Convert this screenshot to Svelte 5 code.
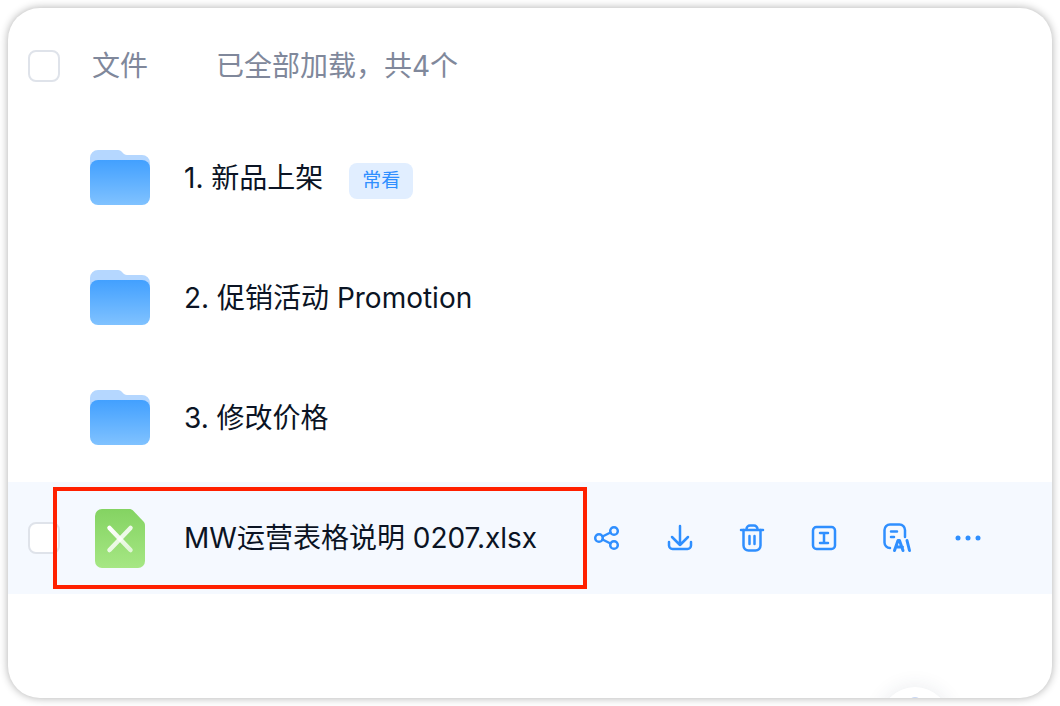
<script>
	const folders = [
		{ name: "1. 新品上架", tag: "常看" },
		{ name: "2. 促销活动 Promotion" },
		{ name: "3. 修改价格" },
	];
</script>

{#snippet checkbox()}
	<span class="checkbox"></span>
{/snippet}

<div class="card">
	<header class="head">
		{@render checkbox()}
		<span class="head-title">文件</span>
		<span class="head-count">已全部加载，共4个</span>
	</header>

	{#each folders as folder}
		<div class="row">
			<svg class="folder" width="60" height="56" viewBox="0 0 60 56">
				<path d="M0 8a8 8 0 0 1 8-8h20c4 0 5 5 9 5h15a8 8 0 0 1 8 8v20H0z" fill="#b5d7ff" />
				<rect y="10" width="60" height="45" rx="8" fill="url(#folderFill)" />
			</svg>
			<span class="name">{folder.name}</span>
			{#if folder.tag}
				<span class="tag">{folder.tag}</span>
			{/if}
		</div>
	{/each}

	<div class="row active">
		{@render checkbox()}
		<svg class="sheet" width="50" height="59" viewBox="0 0 50 59">
			<path d="M7 0h27c2 0 3 .6 4.500 2l9.500 10c1.400 1.500 2 2.600 2 4.500V52a7 7 0 0 1-7 7H7a7 7 0 0 1-7-7V7a7 7 0 0 1 7-7z" fill="url(#sheetFill)" />
			<path d="M35.500 19l-21 22" stroke="url(#crossFill)" stroke-width="4.500" stroke-linecap="round" />
			<path d="M14.500 19l21 22" stroke="url(#crossFillBack)" stroke-width="4.500" stroke-linecap="round" />
		</svg>
		<span class="name">MW运营表格说明 0207.xlsx</span>

		<div class="actions">
			<svg viewBox="0 0 32 32">
				<circle cx="7" cy="16" r="3.800" />
				<circle cx="22" cy="9" r="3.800" />
				<circle cx="22" cy="23" r="3.800" />
				<path d="M10.500 14.500l8-4M10.500 17.500l8 4" />
			</svg>
			<svg viewBox="0 0 32 32">
				<path d="M16 4v19M8 15l8 8 8-8" />
				<path d="M5 20v3.500a3.500 3.500 0 0 0 3.500 3.500h15a3.500 3.500 0 0 0 3.500-3.500V20" />
			</svg>
			<svg viewBox="0 0 32 32">
				<path d="M5 8h22M10.500 8V7a3.500 3.500 0 0 1 3.500-3.500h4A3.500 3.500 0 0 1 21.500 7v1" />
				<path d="M7.500 8v15.500a5 5 0 0 0 5 5h7a5 5 0 0 0 5-5V8" />
				<path d="M13.500 14v8M18.500 14v8" />
			</svg>
			<svg viewBox="0 0 32 32">
				<rect x="5" y="5" width="22" height="22" rx="3.500" />
				<path d="M12 11h8M12 21h8M16 11v10" />
			</svg>
			<svg viewBox="0 0 32 32">
				<path d="M10 26a5.500 5.500 0 0 1-5.500-5.500V8A5.500 5.500 0 0 1 10 2.500h9.500A5.500 5.500 0 0 1 25 8v7" />
				<path d="M11 9.500h6M11 15h3" />
				<path class="bold" d="M14.500 28.500l3.500-10h1.500l3.500 10M16 25h6.500M27 18.500l2.500 10" />
			</svg>
			<svg viewBox="0 0 32 32">
				<circle class="dot" cx="6" cy="16" r="2.500" />
				<circle class="dot" cx="16" cy="16" r="2.500" />
				<circle class="dot" cx="26" cy="16" r="2.500" />
			</svg>
		</div>

		<div class="highlight"></div>
	</div>

	<div class="fab"><span class="fab-mark"></span></div>
</div>

<svg class="defs" width="0" height="0">
	<defs>
		<linearGradient id="folderFill" x1="0" y1="0" x2="0" y2="1">
			<stop offset="0" stop-color="#42a0ff" />
			<stop offset="1" stop-color="#80c2ff" />
		</linearGradient>
		<linearGradient id="sheetFill" x1="0" y1="0" x2="0" y2="1">
			<stop offset="0" stop-color="#84d362" />
			<stop offset="1" stop-color="#a6e784" />
		</linearGradient>
		<linearGradient id="crossFill" gradientUnits="userSpaceOnUse" x1="35" y1="19" x2="15" y2="41">
			<stop offset="0" stop-color="#ffffff" stop-opacity=".85" />
			<stop offset="1" stop-color="#ffffff" stop-opacity=".8" />
		</linearGradient>
		<linearGradient id="crossFillBack" gradientUnits="userSpaceOnUse" x1="15" y1="19" x2="35" y2="41">
			<stop offset="0" stop-color="#ffffff" />
			<stop offset="1" stop-color="#ffffff" stop-opacity=".7" />
		</linearGradient>
	</defs>
</svg>

<style>
	:global(body) {
		background: #fff;
	}

	.card {
		position: relative;
		box-sizing: border-box;
		width: 1044px;
		height: 690px;
		margin: 8px;
		background: #fff;
		border-radius: 32px;
		box-shadow: 0 0 8px rgba(0, 0, 0, 0.32);
		overflow: hidden;
		font-family: Inter, "Noto Sans CJK SC", sans-serif;
		display: flex;
		flex-direction: column;
		gap: 8px;
	}

	.head {
		display: flex;
		align-items: center;
		height: 32px;
		padding: 42px 0 32px 20px;
		font-size: 28px;
		color: #80889b;
	}

	.head span:not(.checkbox) {
		padding-bottom: 4px;
	}

	.head-title {
		margin-left: 32px;
		width: 124px;
		white-space: nowrap;
	}

	.checkbox {
		box-sizing: border-box;
		width: 32px;
		height: 32px;
		background: #fff;
		border: 2px solid #dfe3ea;
		border-radius: 8px;
		flex: none;
	}

	.row {
		position: relative;
		display: flex;
		align-items: center;
		height: 112px;
		padding-left: 82px;
		flex: none;
	}

	.name {
		margin-left: 34px;
		padding-bottom: 4px;
		font-size: 28px;
		color: #0b1424;
		white-space: nowrap;
	}

	.tag {
		margin: 6px 0 0 26px;
		padding: 0 13px;
		height: 36px;
		line-height: 35px;
		font-size: 19px;
		color: #2f8fff;
		background: #e1eeff;
		border-radius: 8px;
	}

	.active {
		background: #f5f9ff;
		padding-left: 20px;
	}

	.sheet {
		margin-left: 35px;
		flex: none;
	}

	.active .name {
		margin-left: 39px;
	}

	.actions {
		margin-left: auto;
		padding-right: 68px;
		display: flex;
		gap: 40px;
	}

	.actions svg {
		width: 32px;
		height: 32px;
		fill: none;
		stroke: #2f8fff;
		stroke-width: 2.500;
		stroke-linecap: round;
		stroke-linejoin: round;
	}

	.actions .dot {
		fill: #2f8fff;
		stroke: none;
	}

	.actions .bold {
		stroke-width: 3;
	}

	.highlight {
		position: absolute;
		left: 45px;
		top: 5px;
		width: 526px;
		height: 94px;
		border: 4px solid #ff2000;
	}

	.fab {
		position: absolute;
		left: 872px;
		top: 679px;
		width: 70px;
		height: 70px;
		background: #fff;
		border-radius: 50%;
		box-shadow: 0 0 20px rgba(40, 60, 90, 0.1);
		display: flex;
		justify-content: center;
	}

	.fab-mark {
		margin-top: 10px;
		width: 14px;
		height: 14px;
		background: #c9d8f5;
		border-radius: 50%;
	}

	.defs {
		position: absolute;
	}
</style>
